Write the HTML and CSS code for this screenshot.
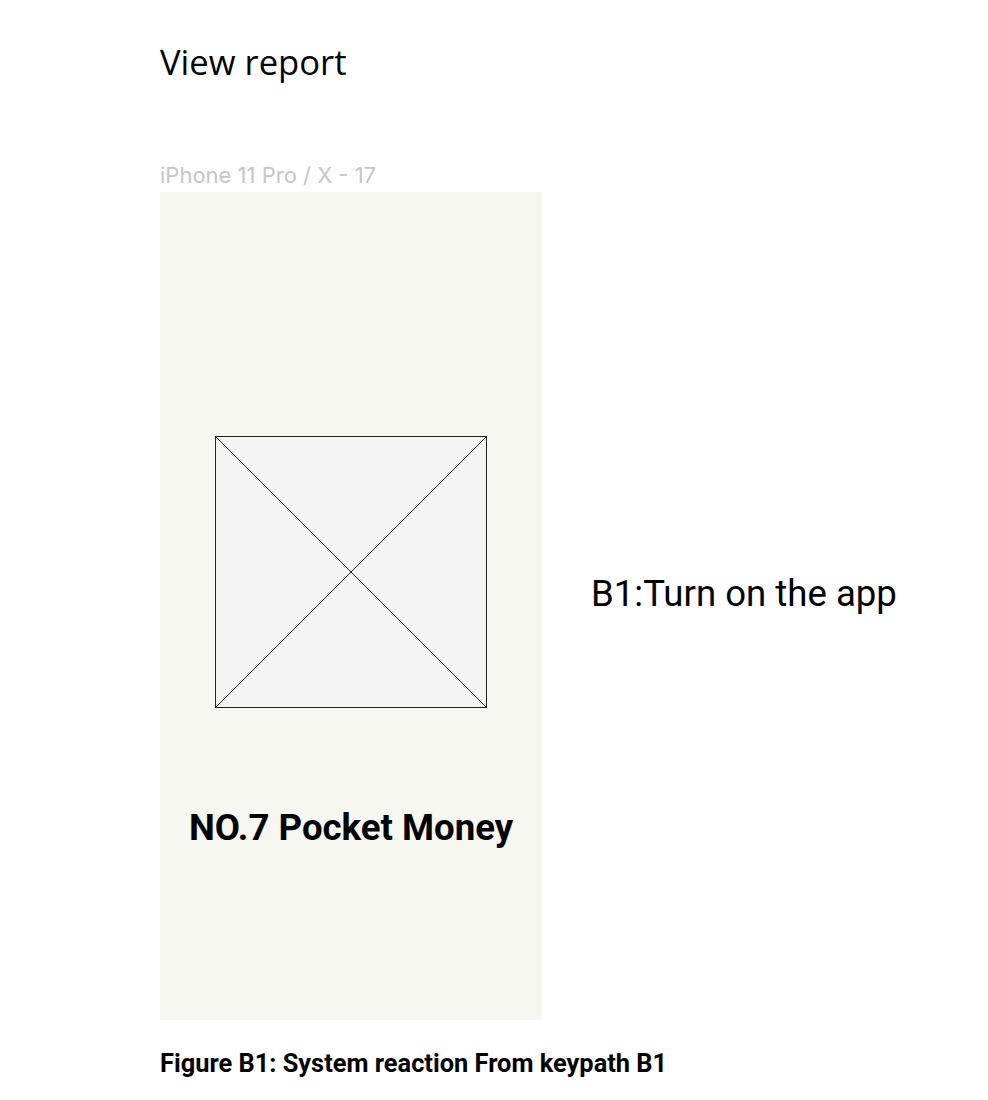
FILE: index.html
```html
<!DOCTYPE html>
<html>
<head>
<meta charset="utf-8">
<link rel="stylesheet" href="styles.css">
</head>
<body>
<div class="page">
  <h1 class="title">View report</h1>
  <div class="frame-label">iPhone 11 Pro / X - 17</div>
  <div class="row">
    <div class="phone">
      <div class="placeholder">
        <svg viewBox="0 0 272 272" width="272" height="272">
          <rect x="0.5" y="0.5" width="271" height="271" fill="#f4f4f4" stroke="#222" stroke-width="1"/>
          <line x1="0" y1="0" x2="272" y2="272" stroke="#222" stroke-width="1"/>
          <line x1="272" y1="0" x2="0" y2="272" stroke="#222" stroke-width="1"/>
        </svg>
      </div>
      <div class="app-name">NO.7 Pocket Money</div>
    </div>
    <div class="step">B1:Turn on the app</div>
  </div>
  <div class="caption">Figure B1: System reaction From keypath B1</div>
</div>
</body>
</html>
```
FILE: styles.css
```css
html, body { margin: 0; padding: 0; background: #fff; }
.page {
  padding: 40px 0 0 160px;
  font-family: Roboto, "Liberation Sans", sans-serif;
  color: #000;
}
.title {
  margin: 0;
  font-family: "Open Sans", "Noto Sans", sans-serif;
  font-weight: 400;
  font-size: 34.6px;
  line-height: 44px;
}
.frame-label {
  margin: 77px 0 3px;
  font-family: Inter, Roboto, sans-serif;
  font-size: 22px;
  line-height: 28px;
  color: #c6c6c6;
}
.row {
  display: flex;
  align-items: center;
  gap: 49px;
}
.phone {
  width: 382px;
  height: 828px;
  background: #f7f7f2;
  display: flex;
  flex-direction: column;
  align-items: center;
}
.placeholder {
  margin-top: 244px;
  width: 272px;
  height: 272px;
}
.placeholder svg { display: block; }
.app-name {
  margin-top: 98px;
  font-size: 36.6px;
  font-weight: 700;
  line-height: 44px;
}
.step {
  font-size: 36.6px;
  line-height: 44px;
  margin-bottom: 24px;
}
.caption {
  margin-top: 26px;
  font-size: 25.4px;
  font-weight: 700;
  line-height: 34px;
}
```
